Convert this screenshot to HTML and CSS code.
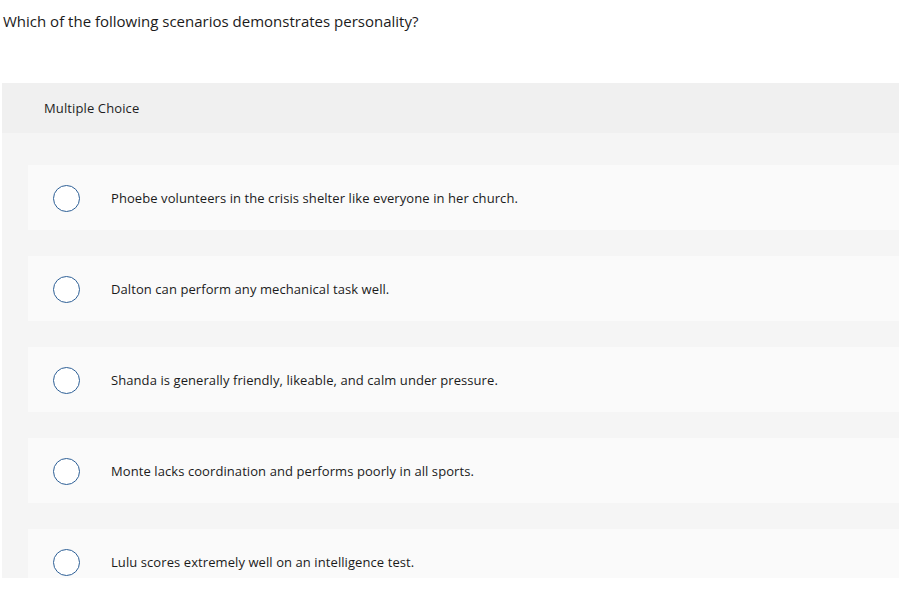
FILE: index.html
```html
<!DOCTYPE html>
<html>
<head>
<meta charset="utf-8">
<link rel="stylesheet" href="styles.css">
</head>
<body>
<div class="page">
  <p class="question">Which of the following scenarios demonstrates personality?</p>
  <div class="panel">
    <div class="panel-head">Multiple Choice</div>
    <div class="options">
      <div class="option"><span class="radio"></span><span class="label">Phoebe volunteers in the crisis shelter like everyone in her church.</span></div>
      <div class="option"><span class="radio"></span><span class="label">Dalton can perform any mechanical task well.</span></div>
      <div class="option"><span class="radio"></span><span class="label">Shanda is generally friendly, likeable, and calm under pressure.</span></div>
      <div class="option"><span class="radio"></span><span class="label">Monte lacks coordination and performs poorly in all sports.</span></div>
      <div class="option"><span class="radio"></span><span class="label">Lulu scores extremely well on an intelligence test.</span></div>
    </div>
  </div>
</div>
</body>
</html>
```
FILE: styles.css
```css
html, body {
  margin: 0;
  padding: 0;
  background: #ffffff;
}
.page {
  font-family: "Open Sans", "Liberation Sans", sans-serif;
  color: #1b1b1b;
  height: 578px;
  overflow: hidden;
}
.question {
  margin: 0;
  padding: 11px 0 0 3px;
  font-size: 15px;
  line-height: 20px;
  height: 72px;
  box-sizing: border-box;
}
.panel {
  margin-left: 2px;
  margin-top: 11px;
  background: #f5f5f5;
}
.panel-head {
  background: #f0f0f0;
  height: 50px;
  padding-left: 42px;
  font-size: 13px;
  letter-spacing: 0.12px;
  line-height: 50px;
  color: #1e1e1e;
}
.options {
  display: flex;
  flex-direction: column;
  gap: 26px;
  padding: 32px 0 40px 26px;
}
.option {
  display: flex;
  align-items: center;
  height: 65px;
  background: #fafafa;
  padding-left: 25px;
}
.radio {
  width: 25px;
  height: 25px;
  border: 1.5px solid #2d5f96;
  border-radius: 50%;
  background: #ffffff;
  flex: none;
  margin-right: 31px;
  margin-top: 1px;
}
.label {
  font-size: 13px;
  letter-spacing: 0.08px;
  color: #1b1b1b;
}
```
